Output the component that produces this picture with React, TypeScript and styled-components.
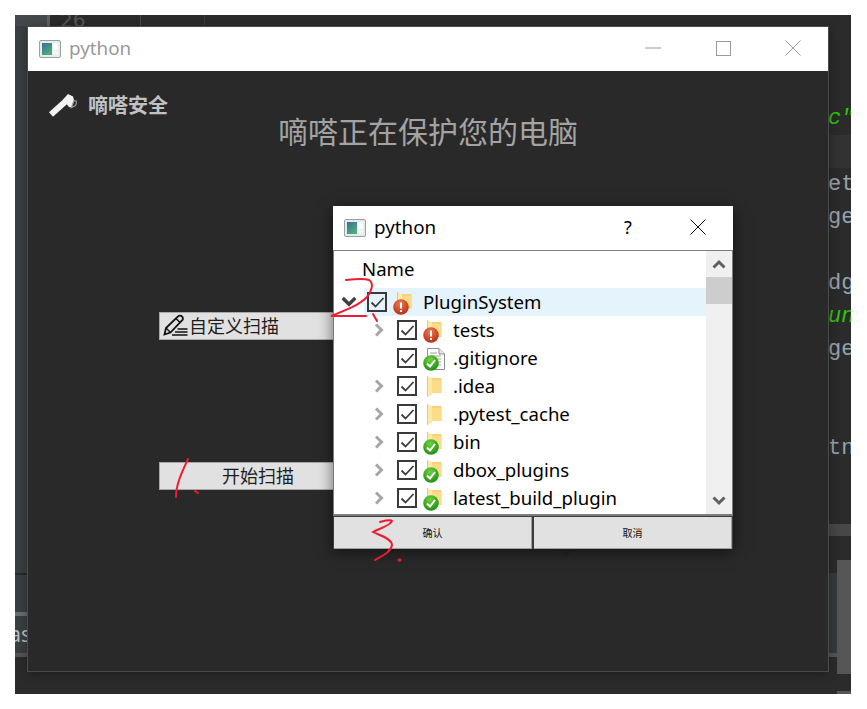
import styled, { createGlobalStyle } from "styled-components";

const UI_FONT = `"Noto Sans", "Noto Sans CJK SC", sans-serif`;
const CJK_FONT = `"Noto Sans CJK SC", "Noto Sans", sans-serif`;

const GlobalStyle = createGlobalStyle`
  html, body {
    margin: 0;
    background: #ffffff;
  }
`;

const Page = styled.div`
  position: relative;
  width: 867px;
  height: 709px;
  padding: 15px;
  box-sizing: border-box;
  overflow: hidden;
  background: #ffffff;
`;

const Desktop = styled.div`
  width: 836px;
  height: 679px;
  display: grid;
  grid-template-columns: 12px 802px 22px;
  grid-template-rows: 11px 646px 22px;
  background: #2b2b2b;
`;

/* pieces of the editor behind the window */
const TopStrip = styled.div`
  grid-column: 1 / 4;
  display: flex;
  overflow: hidden;
`;

const TabCorner = styled.div`
  width: 32px;
  background: #46494b;
  border-right: 3px solid #5f6264;
`;

const Gutter = styled.div`
  width: 91px;
  padding-left: 10px;
  box-sizing: border-box;
  border-right: 1px solid #4a4a4a;
  color: #565656;
  font: 20px/10px "DejaVu Sans", sans-serif;
`;

const GutterRest = styled.div`
  width: 63px;
  border-right: 1px solid #3c3c3c;
`;

const LeftStrip = styled.div`
  grid-row: 2 / 4;
  display: flex;
  flex-direction: column;
  overflow: hidden;
`;

const SidePanel = styled.div<{ $h: number }>`
  height: ${(p) => p.$h}px;
  flex: none;
  padding-right: 0;
  background: #3a3f42;
  display: flex;
  justify-content: flex-end;
  align-items: center;
  color: #b8bcc0;
  font: 21px/1 ${UI_FONT};
`;

const SideText = styled.span`
  margin-right: -4px;
`;

const SideRule = styled.div<{ $h: number; $color: string }>`
  height: ${(p) => p.$h}px;
  flex: none;
  background: ${(p) => p.$color};
`;

const RightStrip = styled.div`
  grid-column: 3;
  grid-row: 2 / 4;
  display: flex;
  flex-direction: column;
  overflow: hidden;
`;

const CodeLines = styled.div`
  padding-top: 76px;
  height: 498px;
  box-sizing: border-box;
  flex: none;
`;

const CodeLine = styled.div<{ $green?: boolean; $active?: boolean }>`
  height: 33px;
  line-height: 33px;
  white-space: nowrap;
  text-indent: -1px;
  font-family: "Liberation Mono", monospace;
  font-size: 22px;
  font-style: ${(p) => (p.$green ? "italic" : "normal")};
  color: ${(p) => (p.$green ? "#2fc40e" : "#97a3ad")};
  background: ${(p) => (p.$active ? "#323232" : "transparent")};
`;

const SplitBar = styled.div`
  height: 12px;
  flex: none;
  background: #474747;
`;

const LowerPane = styled.div`
  flex: 1;
  display: flex;
`;

const LowerText = styled.div`
  width: 8px;
  flex: none;
  padding-top: 37px;
`;

const LowerBlock = styled.div`
  height: 80px;
  background: #353a3d;
  border-bottom: 4px solid #555555;
`;

const ThumbColumn = styled.div`
  flex: 1;
  padding-top: 24px;
`;

const Thumb = styled.div<{ $h: number }>`
  height: ${(p) => p.$h}px;
  margin-bottom: 17px;
  background: #565656;
`;

/* main window */
const Window = styled.div`
  position: relative;
  grid-column: 2;
  grid-row: 2;
  border: 1px solid #4b4b4b;
  background: #292929;
  display: flex;
  flex-direction: column;
  box-shadow: 0 2px 10px rgba(0, 0, 0, 0.35);
`;

const TitleBar = styled.div<{ $active?: boolean }>`
  height: 44px;
  flex: none;
  display: flex;
  align-items: center;
  padding-left: 11px;
  background: #ffffff;
  color: ${(p) => (p.$active ? "#000000" : "#999999")};
`;

const TitleText = styled.span`
  margin: -2px 0 0 8px;
  flex: 1;
  font: 18.8px/1 ${UI_FONT};
`;

const TitleButton = styled.div`
  width: 70px;
  height: 44px;
  padding-bottom: 2px;
  box-sizing: border-box;
  display: flex;
  align-items: center;
  justify-content: center;
  font: 18px/1 ${UI_FONT};
`;

const WindowBody = styled.div`
  flex: 1;
  padding-top: 22px;
`;

const Brand = styled.div`
  height: 24px;
  padding-left: 21px;
  display: flex;
  align-items: center;
  gap: 11px;
  color: #c2c2c2;
  font: 700 20px/24px ${CJK_FONT};
`;

const Heading = styled.h1`
  margin: -2px 0 0;
  text-align: center;
  color: #a3a3a3;
  font: 400 30px/30px ${CJK_FONT};
`;

const Actions = styled.div`
  margin: 167px 0 0 131px;
  display: flex;
  flex-direction: column;
  gap: 122px;
`;

const ActionButton = styled.div<{ $left?: boolean }>`
  width: 198px;
  height: 28px;
  box-sizing: border-box;
  display: flex;
  align-items: center;
  justify-content: ${(p) => (p.$left ? "flex-start" : "center")};
  padding: ${(p) => (p.$left ? "0 0 2px 2px" : "0 0 2px")};
  border: 1px solid #a8a8a8;
  background: linear-gradient(90deg, #e1e1e1 90%, #cfcfcf 100%);
  color: #1e1e1e;
  font: 400 18px/1 ${CJK_FONT};
`;

/* file dialog */
const Dialog = styled.div`
  position: absolute;
  left: 305px;
  top: 179px;
  width: 400px;
  height: 343px;
  display: flex;
  flex-direction: column;
  background: #3c3c3c;
  box-shadow: 0 3px 14px rgba(0, 0, 0, 0.55);

  &::after {
    content: "";
    position: absolute;
    left: 224px;
    bottom: -6px;
    border: 10px solid transparent;
    border-top: 6px solid #1c1c1c;
    border-bottom: 0;
  }
`;

const TreeFrame = styled.div`
  height: 266px;
  flex: none;
  box-sizing: border-box;
  display: flex;
  border: 1px solid #7d7d7d;
  border-bottom-width: 2px;
  background: #ffffff;
`;

const Tree = styled.div`
  flex: 1;
  overflow: hidden;
  color: #000000;
  font: 18.6px/28px ${UI_FONT};
`;

const TreeHeader = styled.div`
  height: 37px;
  padding-left: 28px;
  line-height: 36px;
`;

const Row = styled.div<{ $depth: number }>`
  height: 28px;
  display: flex;
  padding-left: ${(p) => p.$depth * 30}px;
`;

const Expander = styled.div`
  width: 30px;
  padding-right: 1px;
  box-sizing: border-box;
  flex: none;
  display: flex;
  align-items: center;
  justify-content: center;
`;

const RowBody = styled.div<{ $selected?: boolean }>`
  flex: 1;
  display: flex;
  align-items: center;
  padding-left: 3px;
  background: ${(p) => (p.$selected ? "#e5f3fd" : "transparent")};
`;

const Check = styled.div`
  width: 20px;
  height: 20px;
  flex: none;
  box-sizing: border-box;
  border: 2px solid #3a3a3a;
  display: flex;
  align-items: center;
  justify-content: center;
`;

const IconSlot = styled.div`
  position: relative;
  width: 24px;
  height: 28px;
  margin: 0 8px 0 4px;
  flex: none;
`;

const ItemGlyph = styled.svg`
  position: absolute;
  left: 6px;
  top: 4px;
`;

const Badge = styled.svg`
  position: absolute;
  left: 2px;
  top: 10.5px;
`;

const Scrollbar = styled.div`
  width: 26px;
  flex: none;
  display: flex;
  flex-direction: column;
  align-items: stretch;
  background: #f0f0f0;
`;

const ScrollArrow = styled.div`
  height: 26px;
  flex: none;
  display: flex;
  align-items: center;
  justify-content: center;
`;

const ScrollThumb = styled.div`
  height: 27px;
  flex: none;
  margin-bottom: auto;
  background: #cdcdcd;
`;

const DialogButtons = styled.div`
  flex: 1;
  display: flex;
  gap: 2px;
  padding: 1px 1px 0;
`;

const DialogButton = styled.div`
  flex: 1;
  display: flex;
  align-items: center;
  justify-content: center;
  background: #e1e1e1;
  border-right: 1px solid #a0a0a0;
  border-bottom: 1px solid #a0a0a0;
  color: #111111;
  font: 400 10px/1 ${CJK_FONT};
`;

const Ink = styled.svg`
  position: absolute;
  left: 0;
  top: 0;
  pointer-events: none;
`;

function AppIcon() {
  return (
    <svg width="22" height="18" viewBox="0 0 22 18">
      <defs>
        <linearGradient id="app-screen" x1="0" y1="0" x2="0.6" y2="1">
          <stop offset="0" stopColor="#3a6f96" />
          <stop offset="1" stopColor="#4fae7e" />
        </linearGradient>
      </defs>
      <rect x="0.5" y="0.5" width="21" height="17" rx="1.5" fill="#e6ebeb" stroke="#98a2a2" />
      <rect x="3" y="3" width="10" height="12" fill="url(#app-screen)" />
      <rect x="14" y="3" width="5" height="7" fill="#ffffff" />
      <rect x="14" y="11" width="5" height="4" fill="#f4f6f6" />
    </svg>
  );
}

function HammerIcon() {
  return (
    <svg width="28" height="24" viewBox="0 0 28 24">
      <path d="M2 21.5 17 8" stroke="#f2f2f2" strokeWidth="6" fill="none" />
      <path d="M14 6.5 19 1 24 3.5 25 7 22.5 14.5 20 14Z" fill="#f2f2f2" />
      <path d="M22.5 14.5 25 7.5 28 8.5 26.5 12.5Z" fill="none" stroke="#9a9a9a" strokeWidth="1.2" />
    </svg>
  );
}

function PencilIcon() {
  return (
    <svg width="27" height="22" viewBox="0 0 26 22" fill="none" stroke="#111111">
      <path d="M2 20.5 3.5 14 15.5 2.5a2.6 2.6 0 0 1 4 0 2.6 2.6 0 0 1 0 4L8 18.5Z" strokeWidth="1.8" />
      <path d="M3.5 14 8 18.5M13.5 4.5 17.8 8.8" strokeWidth="1.4" />
      <path d="M15 15H25M12.5 18H25M9.5 21H25" strokeWidth="1.3" />
    </svg>
  );
}

function Chevron({ dir, color, size = 14 }: { dir: "up" | "down" | "right"; color: string; size?: number }) {
  const d = dir === "up" ? "M1.5 10.5 7 5 12.5 10.5" : dir === "down" ? "M1.5 3.5 7 9 12.5 3.5" : "M4 1.5 9.5 7 4 12.5";
  return (
    <svg width={size} height={size} viewBox="0 0 14 14">
      <path d={d} fill="none" stroke={color} strokeWidth="3" />
    </svg>
  );
}

function FolderGlyph() {
  return (
    <ItemGlyph width="15" height="21" viewBox="0 0 15 21">
      <path d="M4 2H14.5V17H4Z" fill="#f8d27a" />
      <path d="M0 0 5 2V19L0 21Z" fill="#fee9a8" />
      <path d="M5 4H14.5V17H5Z" fill="#fcdc88" />
      <path d="M0.5 0V21" stroke="#eec86a" />
    </ItemGlyph>
  );
}

function FileGlyph() {
  return (
    <ItemGlyph width="18" height="22" viewBox="0 0 18 22">
      <path d="M.5.5H12L17.5 6V21.5H.5Z" fill="#ffffff" stroke="#8f8f8f" />
      <path d="M12 .5V6H17.5" fill="#e8e8e8" stroke="#8f8f8f" />
      <path d="M3 5H10M3 8H14M3 11H14M3 14H14M3 17H14" stroke="#a0a0a0" />
    </ItemGlyph>
  );
}

function StatusBadge({ ok }: { ok: boolean }) {
  const id = ok ? "badge-ok" : "badge-bad";
  return (
    <Badge width="16" height="16" viewBox="0 0 16 16">
      <defs>
        <radialGradient id={id} cx="0.45" cy="0.3" r="0.75">
          <stop offset="0" stopColor={ok ? "#6fd23f" : "#ee7a55"} />
          <stop offset="1" stopColor={ok ? "#1b8a12" : "#b32a0f"} />
        </radialGradient>
      </defs>
      <circle cx="8" cy="8" r="7.8" fill={`url(#${id})`} />
      {ok ? (
        <path d="M4 8.5 7 11.5 12 5" fill="none" stroke="#ffffff" strokeWidth="2" />
      ) : (
        <path d="M8 3.5V9.5M8 11V13" fill="none" stroke="#ffffff" strokeWidth="2" />
      )}
    </Badge>
  );
}

type Item = {
  name: string;
  depth: number;
  status?: "ok" | "bad";
  file?: boolean;
  leaf?: boolean;
  open?: boolean;
};

const items: Item[] = [
  { name: "PluginSystem", depth: 0, status: "bad", open: true },
  { name: "tests", depth: 1, status: "bad" },
  { name: ".gitignore", depth: 1, status: "ok", file: true, leaf: true },
  { name: ".idea", depth: 1 },
  { name: ".pytest_cache", depth: 1 },
  { name: "bin", depth: 1, status: "ok" },
  { name: "dbox_plugins", depth: 1, status: "ok" },
  { name: "latest_build_plugin", depth: 1, status: "ok" },
];

const codeLines = [
  { text: 'c"', green: true },
  { text: "", active: true },
  { text: "et" },
  { text: "ge" },
  { text: "" },
  { text: "dg" },
  { text: "un", green: true },
  { text: "ge" },
  { text: "" },
  { text: "" },
  { text: "tn" },
];

export default function App() {
  return (
    <Page>
      <GlobalStyle />
      <Desktop>
        <TopStrip>
          <TabCorner />
          <Gutter>26</Gutter>
          <GutterRest />
        </TopStrip>

        <LeftStrip>
          <SidePanel $h={547} />
          <SideRule $h={2} $color="#2b2b2b" />
          <SidePanel $h={37} />
          <SideRule $h={4} $color="#696c74" />
          <SidePanel $h={37}>
            <SideText>as</SideText>
          </SidePanel>
          <SideRule $h={4} $color="#555555" />
        </LeftStrip>

        <Window>
          <TitleBar>
            <AppIcon />
            <TitleText>python</TitleText>
            <TitleButton>
              <svg width="16" height="2" viewBox="0 0 16 2">
                <path d="M0 1H16" stroke="#9a9a9a" />
              </svg>
            </TitleButton>
            <TitleButton>
              <svg width="15" height="15" viewBox="0 0 15 15">
                <rect x="0.5" y="0.5" width="14" height="14" fill="none" stroke="#9a9a9a" />
              </svg>
            </TitleButton>
            <TitleButton>
              <svg width="16" height="16" viewBox="0 0 16 16">
                <path d="M.5.5 15.5 15.5M15.5.5.5 15.5" stroke="#9a9a9a" />
              </svg>
            </TitleButton>
          </TitleBar>

          <WindowBody>
            <Brand>
              <HammerIcon />
              嘀嗒安全
            </Brand>
            <Heading>嘀嗒正在保护您的电脑</Heading>
            <Actions>
              <ActionButton $left>
                <PencilIcon />
                自定义扫描
              </ActionButton>
              <ActionButton>开始扫描</ActionButton>
            </Actions>
          </WindowBody>

          <Dialog>
            <TitleBar $active>
              <AppIcon />
              <TitleText>python</TitleText>
              <TitleButton>?</TitleButton>
              <TitleButton>
                <svg width="16" height="16" viewBox="0 0 16 16">
                  <path d="M.5.5 15.5 15.5M15.5.5.5 15.5" stroke="#111111" />
                </svg>
              </TitleButton>
            </TitleBar>

            <TreeFrame>
              <Tree>
                <TreeHeader>Name</TreeHeader>
                {items.map((item) => (
                  <Row key={item.name} $depth={item.depth}>
                    <Expander>
                      {item.open ? (
                        <Chevron dir="down" color="#404040" size={16} />
                      ) : item.leaf ? null : (
                        <Chevron dir="right" color="#a6a6a6" />
                      )}
                    </Expander>
                    <RowBody $selected={item.depth === 0}>
                      <Check>
                        <svg width="15" height="13" viewBox="0 0 15 13">
                          <path d="M1.5 6.5 5.5 10.5 13.5 2" fill="none" stroke="#3c3c3c" strokeWidth="1.8" />
                        </svg>
                      </Check>
                      <IconSlot>
                        {item.file ? <FileGlyph /> : <FolderGlyph />}
                        {item.status && <StatusBadge ok={item.status === "ok"} />}
                      </IconSlot>
                      {item.name}
                    </RowBody>
                  </Row>
                ))}
              </Tree>
              <Scrollbar>
                <ScrollArrow>
                  <Chevron dir="up" color="#606060" />
                </ScrollArrow>
                <ScrollThumb />
                <ScrollArrow>
                  <Chevron dir="down" color="#606060" />
                </ScrollArrow>
              </Scrollbar>
            </TreeFrame>

            <DialogButtons>
              <DialogButton>确认</DialogButton>
              <DialogButton>取消</DialogButton>
            </DialogButtons>
          </Dialog>
        </Window>

        <RightStrip>
          <CodeLines>
            {codeLines.map((line, i) => (
              <CodeLine key={i} $green={line.green} $active={line.active}>
                {line.text}
              </CodeLine>
            ))}
          </CodeLines>
          <SplitBar />
          <LowerPane>
            <LowerText>
              <LowerBlock />
            </LowerText>
            <ThumbColumn>
              <Thumb $h={114} />
              <Thumb $h={10} />
            </ThumbColumn>
          </LowerPane>
        </RightStrip>
      </Desktop>

      <Ink width="867" height="709" viewBox="0 0 867 709" fill="none" stroke="#ee1c2e" strokeWidth="2" strokeLinecap="round">
        <path d="M188 459C182 472 176 484 176 497" />
        <path d="M195 491 198 493" />
        <path d="M346 280C354 279 364 278 369 280 374 283 372 291 367 297 358 306 344 311 331 316 342 316 356 316 366 316" />
        <path d="M373 314 377 321" />
        <path d="M380 522C384 521 390 519 392 521 390 526 378 529 373 532 378 535 392 538 392 545 391 552 382 556 375 560" />
        <path d="M399 560 400 560" strokeWidth="3" />
      </Ink>
    </Page>
  );
}
